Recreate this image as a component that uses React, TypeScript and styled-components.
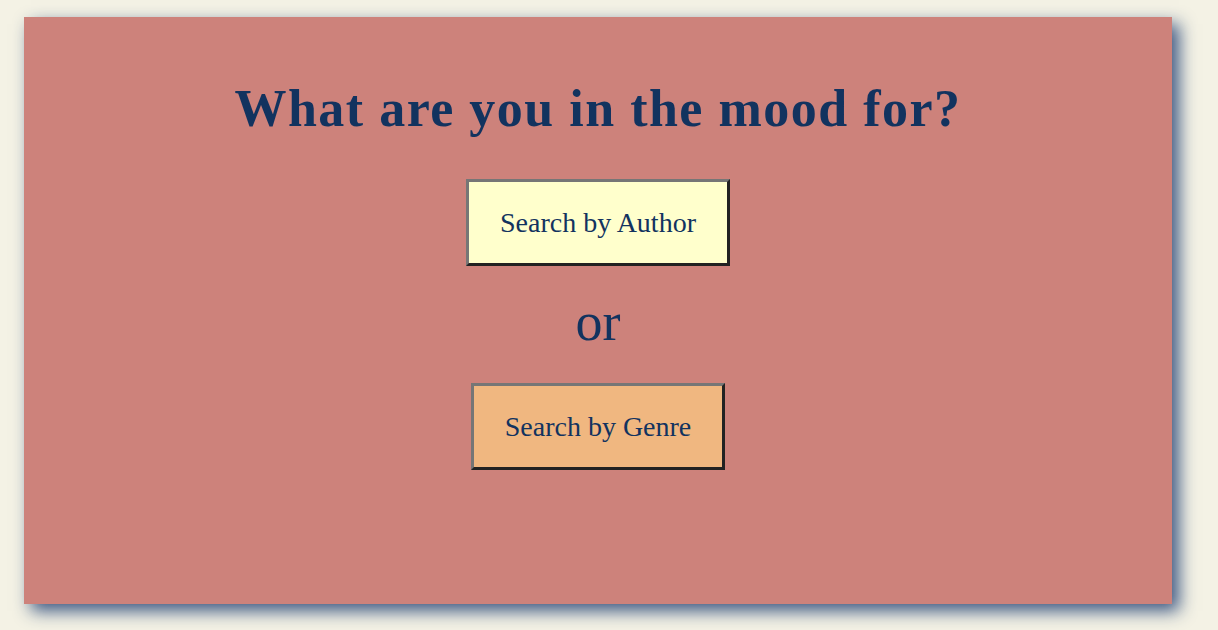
import React from 'react'
import styled, { createGlobalStyle } from 'styled-components'

//// styles
const GlobalStyle = createGlobalStyle`
  body {
    margin: 0;
    background: #f4f2e5;
    font-family: "Liberation Serif", "Times New Roman", serif;
  }
`

const Page = styled.div`
  padding: 17px 0 0 24px;
  height: 630px;
  box-sizing: border-box;
`

const Card = styled.div`
  width: 1148px;
  height: 587px;
  background: #cd827b;
  box-shadow: 7px 7px 16px rgba(40, 70, 120, 0.9);
  display: flex;
  flex-direction: column;
  align-items: center;
  padding-top: 62px;
  box-sizing: border-box;
  color: #12335f;
`

const Title = styled.h1`
  margin: 0 0 40px;
  font-size: 52px;
  line-height: 60px;
  font-weight: bold;
  letter-spacing: 1.5px;
`

const Or = styled.div`
  font-size: 54px;
  line-height: 54px;
  margin: 29px 0 34px;
`

const SearchButton = styled.button<{ $kind: 'author' | 'genre' }>`
  background: ${p => (p.$kind === 'author' ? '#ffffcc' : '#f0b780')};
  border: 3px solid;
  border-color: #767676 #222 #222 #767676;
  padding: 0 31px;
  height: 87px;
  font-family: "Liberation Serif", "Times New Roman", serif;
  font-size: 28px;
  color: #12335f;
  cursor: pointer;
`

const App: React.FC = () => {
  return (
    <>
      <GlobalStyle />
      <Page>
        <Card>
          <Title>What are you in the mood for?</Title>
          <SearchButton $kind="author">Search by Author</SearchButton>
          <Or>or</Or>
          <SearchButton $kind="genre">Search by Genre</SearchButton>
        </Card>
      </Page>
    </>
  )
}

export default App
